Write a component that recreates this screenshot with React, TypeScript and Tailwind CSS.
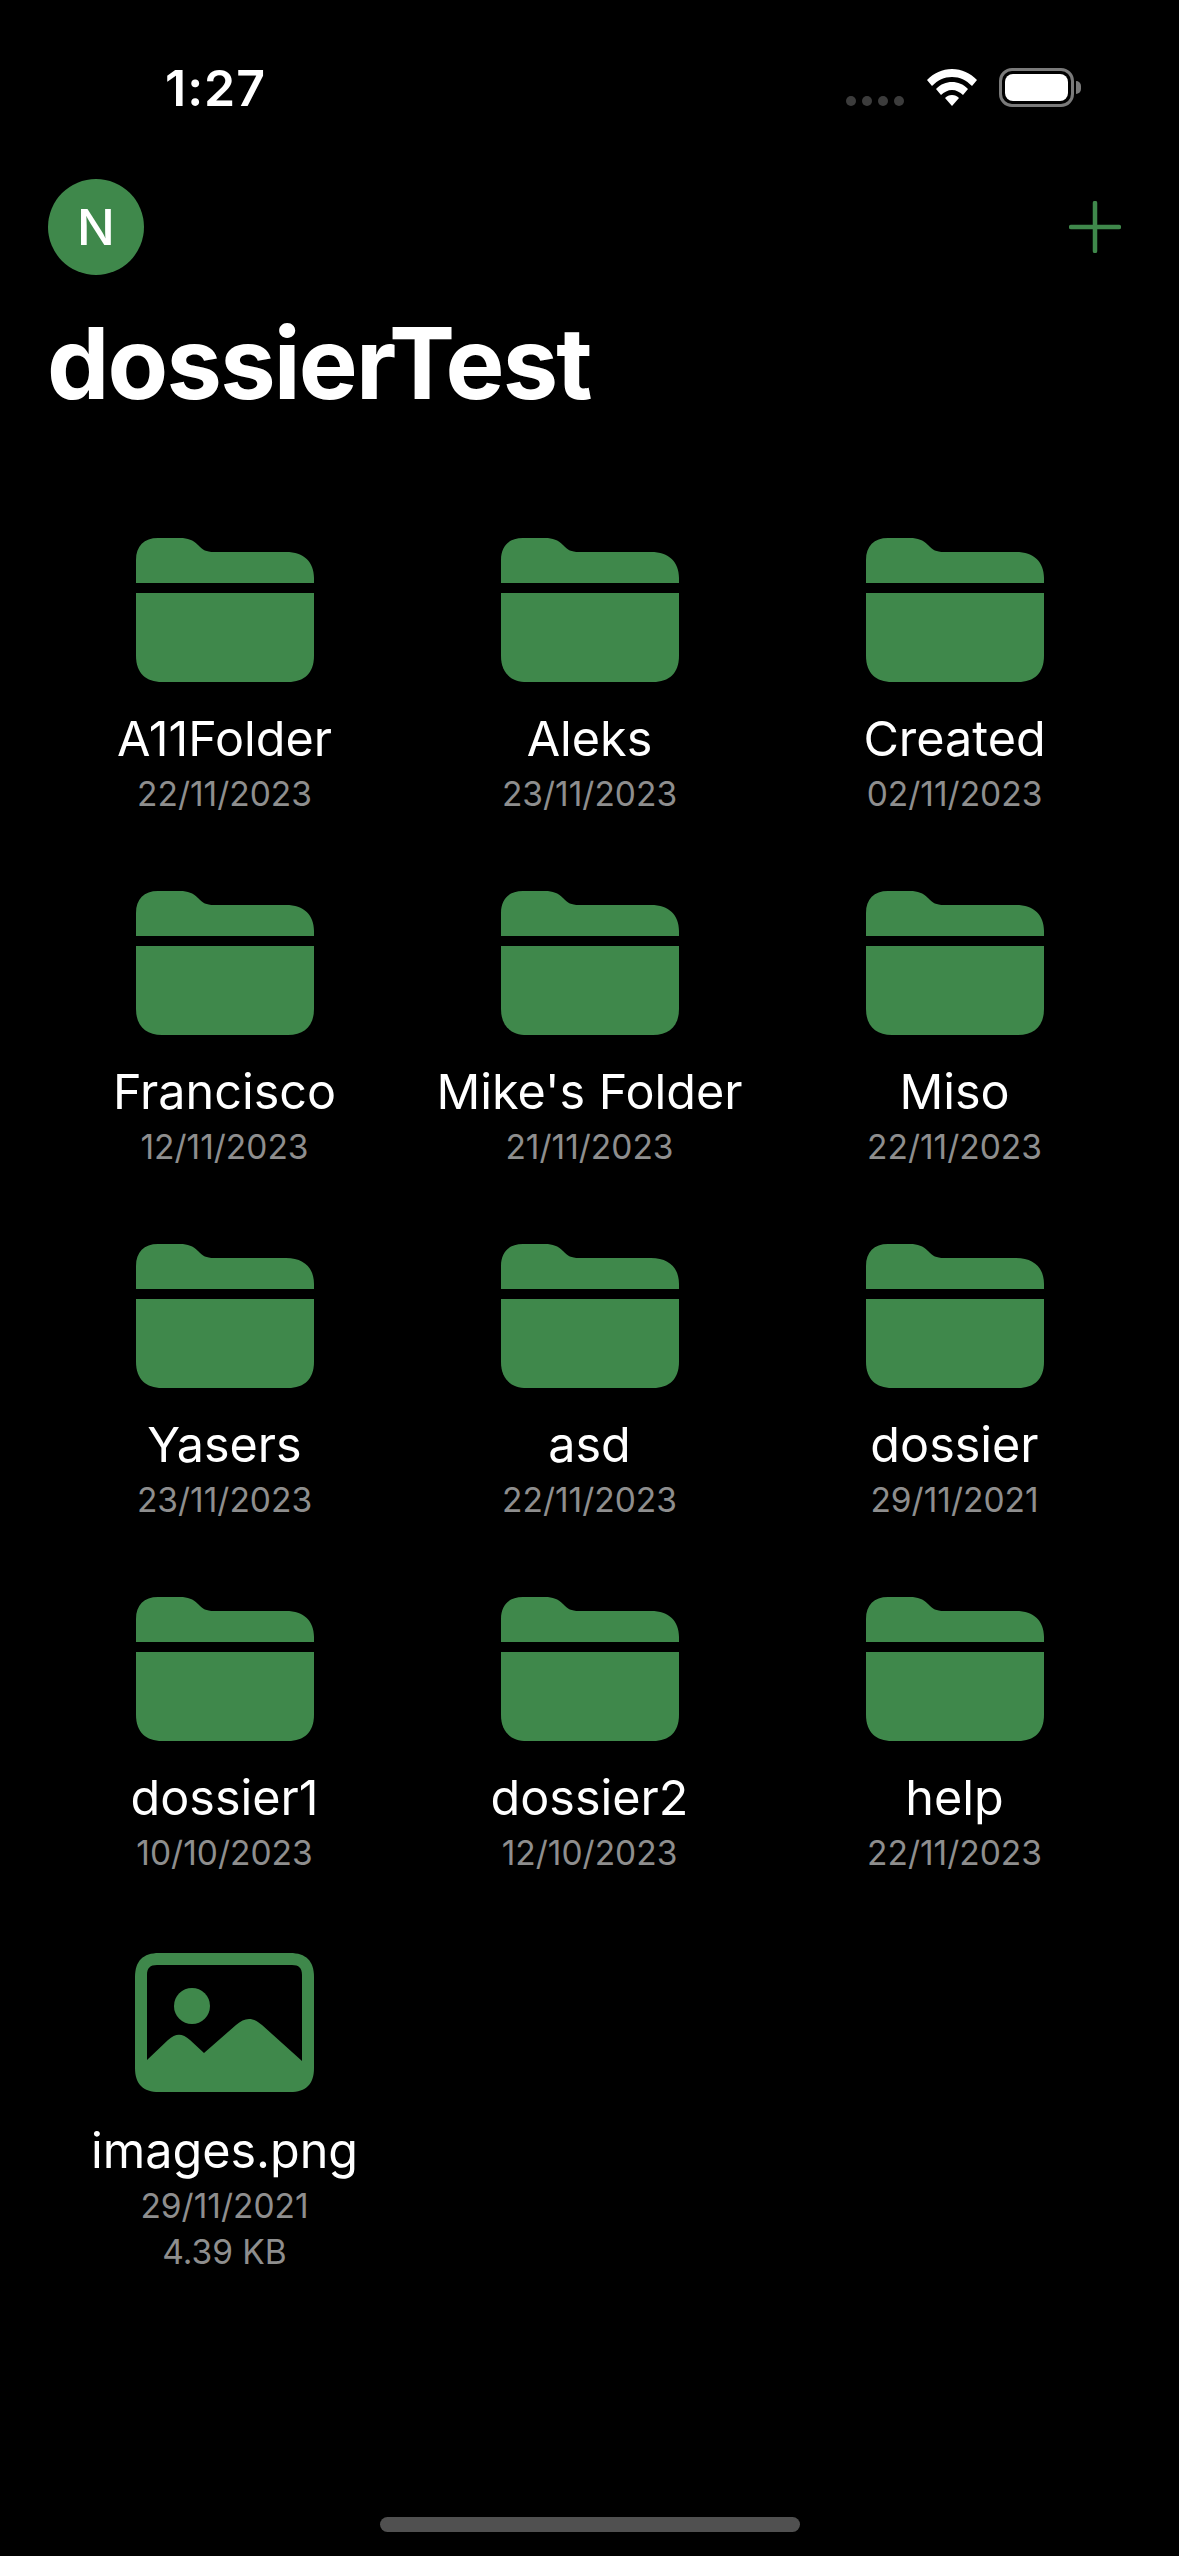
const items = [
  { name: "A11Folder", date: "22/11/2023" },
  { name: "Aleks", date: "23/11/2023" },
  { name: "Created", date: "02/11/2023" },
  { name: "Francisco", date: "12/11/2023" },
  { name: "Mike's Folder", date: "21/11/2023" },
  { name: "Miso", date: "22/11/2023" },
  { name: "Yasers", date: "23/11/2023" },
  { name: "asd", date: "22/11/2023" },
  { name: "dossier", date: "29/11/2021" },
  { name: "dossier1", date: "10/10/2023" },
  { name: "dossier2", date: "12/10/2023" },
  { name: "help", date: "22/11/2023" },
];

function FolderIcon() {
  return (
    <svg width="178" height="144" viewBox="0 0 178 144" className="fill-[#3f884b]">
      <path d="M0 45V22C0 8 8 0 22 0H44C52 0 57 2 62 7C67 12 70 14 78 14H150C168 14 178 24 178 40V45Z" />
      <path d="M0 55H178V118C178 135 168 144 152 144H26C10 144 0 135 0 118Z" />
    </svg>
  );
}

function ImageIcon() {
  return (
    <svg width="179" height="139" viewBox="0 0 179 139" className="fill-[#3f884b]">
      <path
        fillRule="evenodd"
        d="M24 0H155C171 0 179 8 179 24V115C179 131 171 139 155 139H24C8 139 0 131 0 115V24C0 8 8 0 24 0ZM12 107V22C12 15 15 12 22 12H157C164 12 167 15 167 22V108L127 72C118 64 110 64 101 72L69 100L55 87C47 80 41 80 33 87Z"
      />
      <circle cx="57" cy="53" r="18" />
    </svg>
  );
}

function GridItem({ name, date, size, icon }: { name: string; date: string; size?: string; icon: React.ReactNode }) {
  return (
    <div className="flex flex-col items-center">
      <div className="flex h-[144px] items-center justify-center">{icon}</div>
      <p className="mt-[27px] text-[48.5px] leading-[60px] whitespace-nowrap text-white">{name}</p>
      <p className="mt-[3px] text-[33.5px] leading-[45px] text-[#8e8e8e]">{date}</p>
      {size && <p className="mt-[1px] text-[33.5px] leading-[45px] text-[#8e8e8e]">{size}</p>}
    </div>
  );
}

export default function App() {
  return (
    <div className="flex h-[2556px] w-[1179px] flex-col overflow-hidden bg-black font-['Inter',sans-serif] text-white">
      {/* Status bar */}
      <div className="flex h-[179px] items-start justify-between pt-[58px] pr-[98px] pl-[165px]">
        <span className="text-[50px] leading-[60px] font-semibold tracking-[1px]">1:27</span>
        <div className="mt-[10px] flex items-start">
          <div className="mt-[28px] flex gap-[6px]">
            <span className="h-[10px] w-[10px] rounded-full bg-[#3c3c3c]" />
            <span className="h-[10px] w-[10px] rounded-full bg-[#3c3c3c]" />
            <span className="h-[10px] w-[10px] rounded-full bg-[#3c3c3c]" />
            <span className="h-[10px] w-[10px] rounded-full bg-[#3c3c3c]" />
          </div>
          <svg width="50" height="37" viewBox="0 0 50 37" className="mt-[1px] ml-[23px] fill-white">
            <path d="M25 0C35 0 43 4 50 11L45 17C39 11 33 8 25 8C17 8 11 11 5 17L0 11C7 4 15 0 25 0Z" />
            <path d="M25 13C31 13 36 15 41 20L36 26C33 23 29 21 25 21C21 21 17 23 14 26L9 20C14 15 19 13 25 13Z" />
            <path d="M25 26C28 26 30 27 32 29L25 37L18 29C20 27 22 26 25 26Z" />
          </svg>
          <div className="ml-[22px] flex items-center">
            <div className="h-[39px] w-[75px] rounded-[13px] border-[3px] border-[#7a7a7a] p-[3px]">
              <div className="h-full w-full rounded-[8px] bg-white" />
            </div>
            <div className="ml-[2px] h-[13px] w-[5px] rounded-r-full bg-[#7a7a7a]" />
          </div>
        </div>
      </div>

      {/* Nav row */}
      <div className="flex h-[96px] items-center justify-between pr-[58px] pl-[48px]">
        <div className="flex h-[96px] w-[96px] items-center justify-center rounded-full bg-[#3f884b] text-[50px] font-medium">N</div>
        <svg width="52" height="52" viewBox="0 0 52 52" className="stroke-[#3f884b]" strokeLinecap="round" strokeWidth="4.5">
          <path d="M26 2V50" />
          <path d="M2 26H50" />
        </svg>
      </div>

      <h1 className="mt-[28px] pl-[47px] text-[99px] leading-[120px] font-bold tracking-[-1.8px]">dossierTest</h1>

      {/* Files */}
      <div className="mt-[115px] grid auto-rows-[353px] grid-cols-3 pr-[42px] pl-[42px]">
        {items.map((f) => (
          <GridItem key={f.name} name={f.name} date={f.date} icon={<FolderIcon />} />
        ))}
        <GridItem name="images.png" date="29/11/2021" size="4.39 KB" icon={<ImageIcon />} />
      </div>

      <div className="mt-auto mb-[24px] flex justify-center">
        <div className="h-[15px] w-[420px] rounded-full bg-[#505050]" />
      </div>
    </div>
  );
}
